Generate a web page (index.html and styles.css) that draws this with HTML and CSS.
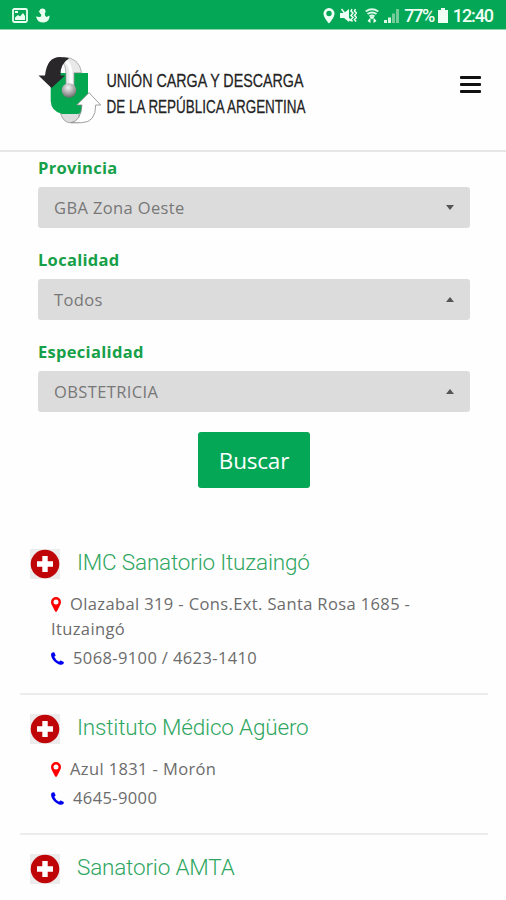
FILE: index.html
```html
<!DOCTYPE html>
<html lang="es">
<head>
  <meta charset="UTF-8" />
  <meta name="viewport" content="width=device-width, initial-scale=1.0"/>
  <title>Cartilla</title>
  <link rel="stylesheet" href="styles.css">
</head>
<body>

  <!-- Shared icons -->
  <svg class="sprite" width="0" height="0">
    <symbol id="cross" viewBox="0 0 30 30">
      <rect width="30" height="30" fill="#ececec"/>
      <circle cx="15" cy="15" r="14.3" fill="#c00508"/>
      <path d="M12.3 7h5.4v5.3H23v5.4h-5.3V23h-5.4v-5.3H7v-5.4h5.3z" fill="#fff"/>
    </symbol>
    <symbol id="pin" viewBox="0 0 10 15">
      <path fill-rule="evenodd" d="M5 0a5 5 0 0 1 5 5c0 1.2-.3 1.9-.8 2.9L6 14.2Q5 15.5 4 14.2L.8 7.9C.3 6.9 0 6.2 0 5a5 5 0 0 1 5-5zm0 2.500a2.500 2.500 0 1 0 0 5 2.500 2.500 0 0 0 0-5z" fill="red"/>
    </symbol>
    <symbol id="phone" viewBox="0 0 13 13">
      <path d="M.8.8Q2-.1 3.200.2L4.600 3.200Q4.600 3.800 3.200 4.800Q4.500 8 8.100 9.800Q9.200 8.300 9.800 8.400L12.800 10Q13 11.500 12 12.300Q10.500 13.200 8 12.400Q2.300 10 .5 5Q-.5 2.200.8.800z" fill="#0000f0"/>
    </symbol>
  </svg>

  <div class="status-bar">
    <div class="status-left">
      <svg width="16" height="15" viewBox="0 0 16 15">
        <rect x="1" y="1" width="14" height="13" rx="1.5" fill="none" stroke="#e9fff0" stroke-width="1.8"/>
        <path d="M3 12V9.500l3-2.500 2 1.500L11 5l2 3v4z" fill="#e9fff0"/>
        <path d="M3 3h3v2H3z" fill="#e9fff0"/>
      </svg>
      <svg width="14" height="15" viewBox="0 0 14 15">
        <circle cx="6.500" cy="3.500" r="3" fill="#e9fff0"/>
        <path d="M2.500 3.500L5 2.500v2.500zM5 6h4q-.5 2 1.500 3l3-1.500q.5 6-5.500 7-6 .3-7.500-4.500L0 8.500l3.500.5Q6 8.500 5 6z" fill="#e9fff0"/>
      </svg>
    </div>
    <div class="status-right">
      <svg width="12" height="16" viewBox="0 0 12 16">
        <path fill-rule="evenodd" d="M6 0a5.500 5.500 0 0 1 5.500 5.700C11.500 9.500 6 15.500 6 15.500S.5 9.500.5 5.700A5.500 5.500 0 0 1 6 0zm0 2.800a2.700 2.700 0 1 0 0 5.400 2.700 2.700 0 0 0 0-5.400z" fill="#f0fff5"/>
      </svg>
      <svg class="mute" width="17" height="15" viewBox="0 0 17 15">
        <path d="M0 5h4l5-4v13l-5-4H0z" fill="#f0fff5"/>
        <path d="M1.500 1l9 12M12 1l-1 2 2 2-2 2.500 2 2-2 2 1.500 2M15.500 1l-1 2 2 2-2 2.500 2 2-2 2 1.500 2" fill="none" stroke="#f0fff5" stroke-width="1.500"/>
      </svg>
      <svg class="wifi" width="14" height="16" viewBox="0 0 14 16">
        <path d="M.7 3.500Q7-1 13.300 3.500M2.500 6Q7 3 11.500 6M4.500 8.300Q7 6.800 9.500 8.300" fill="none" stroke="#d9f7e5" stroke-width="1.900"/>
        <path d="M4.500 8.500h5L7 11.500zM2.500 13L5.500 9.500V15zM11.500 13L8.500 9.500V15z" fill="#f0fff5"/>
      </svg>
      <svg class="signal" width="15" height="14" viewBox="0 0 15 14">
        <path d="M0 14v-3h3v3zM4 14V8.500h3V14z" fill="#d9f7e5"/>
        <path d="M8 14V4.500h3V14zM12 14V0h3v14z" fill="#75cc9b"/>
      </svg>
      <span class="percent">77%</span>
      <svg class="battery" width="10" height="15" viewBox="0 0 10 15">
        <path d="M3 0h4v2h3v13H0V2h3z" fill="#f0fff5"/>
      </svg>
      <span class="clock">12:40</span>
    </div>
  </div>

  <header class="header">
    <svg class="logo" width="330" height="70" viewBox="0 0 330 70">
      <defs>
        <radialGradient id="ball" cx=".45" cy=".3" r=".7">
          <stop offset="0" stop-color="#f4f4f4"/>
          <stop offset=".6" stop-color="#a5a5a5"/>
          <stop offset="1" stop-color="#686868"/>
        </radialGradient>
      </defs>
      <path d="M22 56q3 10.500 10 10.700h9V56z" fill="#ddd" stroke="#888" stroke-width=".7"/>
      <path d="M12.700 17H50v27q0 13-11 14H24q-11-3-11.300-13z" fill="#05a650"/>
      <path d="M25 1.300Q41 1 43.700 16.700H36V34h-8V17Q28 10 24 5z" fill="#e9e9e9" stroke="#999" stroke-width=".7"/>
      <path d="M28 5q5 4 5 14v9" fill="none" stroke="#fff" stroke-width="3"/>
      <circle cx="31" cy="34.500" r="7.300" fill="url(#ball)"/>
      <path d="M13.500 32L.5 19.500H7Q9 1 22 1q6 0 9 1.500-9 5-8.500 17H27z" fill="#292729"/>
      <path d="M51 36.700L62.700 49h-5q0 17.500-14 17.700H33Q43 65 44 49h-5.300z" fill="#fff" stroke="#888" stroke-width=".8"/>
      <g class="logo-text" transform="scale(1 1.28)">
        <text x="68.500" y="24.200" textLength="197" lengthAdjust="spacingAndGlyphs">UNIÓN CARGA Y DESCARGA</text>
        <text x="68.500" y="44.500" textLength="199" lengthAdjust="spacingAndGlyphs">DE LA REPÚBLICA ARGENTINA</text>
      </g>
    </svg>
    <button class="menu-btn" aria-label="Menú">
      <span></span>
      <span></span>
      <span></span>
    </button>
  </header>

  <form class="search-form">
    <label>Provincia</label>
    <div class="select"><span>GBA Zona Oeste</span><i class="caret down"></i></div>
    <label>Localidad</label>
    <div class="select"><span>Todos</span><i class="caret up"></i></div>
    <label>Especialidad</label>
    <div class="select"><span>OBSTETRICIA</span><i class="caret up"></i></div>
    <button type="button" class="btn">Buscar</button>
  </form>

  <div class="results">
    <div class="result">
      <h2><svg width="30" height="30"><use href="#cross"/></svg><span>IMC Sanatorio Ituzaingó</span></h2>
      <p class="address"><svg class="pin" width="10" height="15"><use href="#pin"/></svg>Olazabal 319 - Cons.Ext. Santa Rosa 1685 - Ituzaingó</p>
      <p class="phone"><svg width="13" height="13"><use href="#phone"/></svg>5068-9100 / 4623-1410</p>
    </div>
    <div class="result">
      <h2><svg width="30" height="30"><use href="#cross"/></svg><span>Instituto Médico Agüero</span></h2>
      <p class="address"><svg class="pin" width="10" height="15"><use href="#pin"/></svg>Azul 1831 - Morón</p>
      <p class="phone"><svg width="13" height="13"><use href="#phone"/></svg>4645-9000</p>
    </div>
    <div class="result">
      <h2><svg width="30" height="30"><use href="#cross"/></svg><span>Sanatorio AMTA</span></h2>
    </div>
  </div>

</body>
</html>
```
FILE: styles.css
```css
* {
  box-sizing: border-box;
}

body {
  margin: 0;
  height: 900px;
  overflow: hidden;
  background: #fefefe;
  font-family: "Open Sans", sans-serif;
  color: #6c6c6c;
}

svg {
  flex: none;
}

.sprite {
  display: block;
}

.status-bar {
  display: flex;
  justify-content: space-between;
  align-items: center;
  height: 30px;
  padding: 2px 13px 0 12px;
  background: #04a755;
  border-bottom: 1px solid #8ed3ac;
  font-family: Roboto, sans-serif;
  font-size: 18px;
  font-weight: 500;
  color: #f0fff5;
}

.status-left,
.status-right {
  display: flex;
  align-items: center;
}

.status-left {
  gap: 8px;
}

.mute {
  margin-left: 5px;
}

.wifi {
  margin-left: 8px;
}

.signal {
  margin: 0 5px 0 5px;
}

.battery {
  margin: 0 5px 0 4px;
}

.percent {
  letter-spacing: -1.4px;
}

.clock {
  letter-spacing: -1.1px;
}

.header {
  display: flex;
  justify-content: space-between;
  align-items: flex-start;
  height: 122px;
  padding: 26px 25px 0 38px;
  border-bottom: 2px solid #e6e6e6;
}

.logo-text {
  font-family: "Liberation Sans", Arial, sans-serif;
  font-size: 15px;
  fill: #222;
  stroke: #222;
  stroke-width: 0.2px;
}

.menu-btn {
  display: flex;
  flex-direction: column;
  gap: 4px;
  width: 21px;
  margin-top: 20px;
  padding: 0;
  border: none;
  background: none;
}

.menu-btn span {
  height: 3px;
  border-radius: 1px;
  background: #111;
}

.search-form {
  display: flex;
  flex-direction: column;
  padding: 0 36px 0 38px;
}

.search-form label {
  height: 35px;
  padding-top: 4px;
  font-size: 16.5px;
  font-weight: 700;
  line-height: 24px;
  letter-spacing: 0.3px;
  color: #16a048;
}

.select {
  display: flex;
  justify-content: space-between;
  align-items: center;
  height: 41px;
  margin-bottom: 16px;
  padding: 0 16px;
  border-radius: 3px;
  background: #dcdcdc;
  font-size: 16.5px;
  letter-spacing: 0.38px;
  color: #777;
}

.caret {
  border-left: 4.5px solid transparent;
  border-right: 4.5px solid transparent;
}

.down {
  border-top: 5px solid #555;
}

.up {
  border-bottom: 5px solid #555;
}

.btn {
  align-self: center;
  width: 112px;
  height: 56px;
  margin-top: 4px;
  padding: 0;
  border: none;
  border-radius: 3px;
  background: #04a755;
  font-family: "Open Sans", sans-serif;
  font-size: 22.5px;
  font-weight: 500;
  letter-spacing: -0.2px;
  color: #fff;
}

.results {
  padding: 42px 18px 0 20px;
}

.result {
  padding: 18px 50px 19px 10px;
  border-bottom: 2px solid #ececec;
}

.result h2 {
  display: flex;
  align-items: center;
  gap: 17px;
  height: 32px;
  margin: 0 0 11px;
  font-family: Roboto, sans-serif;
  font-size: 22.5px;
  font-weight: 300;
  letter-spacing: -0.18px;
  color: #2fa661;
}

.result h2 span {
  position: relative;
  top: -2px;
}

.result p {
  margin: 0 0 4px 21px;
  font-size: 16.5px;
  line-height: 25px;
  letter-spacing: 0.38px;
}

.pin {
  margin-right: 9px;
  vertical-align: -2px;
}

.phone svg {
  margin-right: 9px;
  vertical-align: -1px;
}
```
